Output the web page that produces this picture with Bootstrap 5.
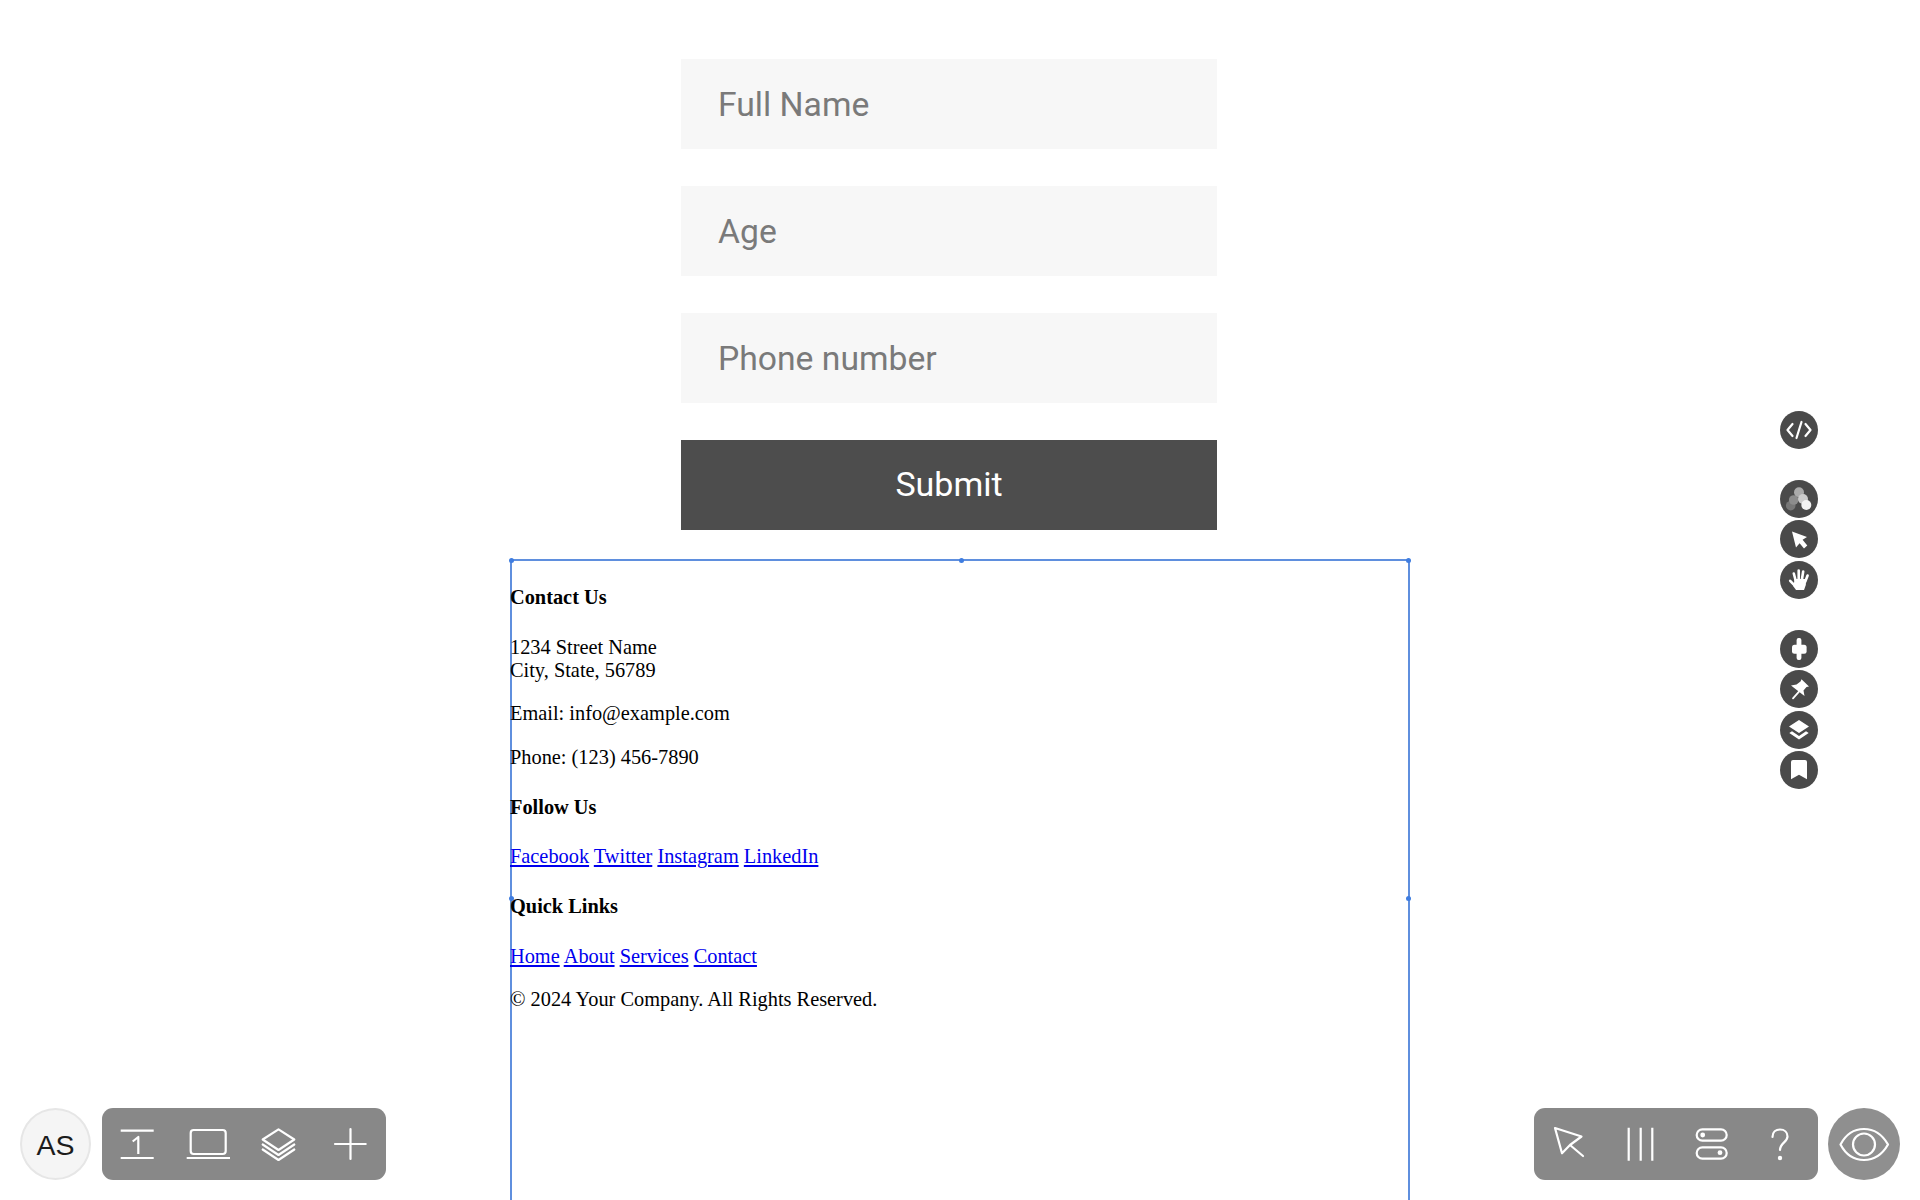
<!DOCTYPE html>
<html lang="en">
<head>
<meta charset="utf-8">
<title>Contact form</title>
<link href="https://cdn.jsdelivr.net/npm/bootstrap@5.3.0/dist/css/bootstrap.min.css" rel="stylesheet">
<style>
html,body{height:1200px;overflow:hidden;background:#fff}
.page-frame{width:900px;margin:0 auto;height:1200px}
.entry-form{width:536px;margin-left:171px;padding-top:59px;gap:37px}
.entry-form .form-control{height:90px;border:0;border-radius:0;background:#f7f7f7;padding:0 37px;font:400 33.7px Roboto,sans-serif;box-shadow:none}
.entry-form .form-control::placeholder{color:#7a7a7a;opacity:1}
.entry-form .send-btn{height:90px;border:0;border-radius:0;background:#4d4d4d;color:#fff;font:400 34px Roboto,sans-serif;padding:0 0 3px}
.select-box{margin-top:29px;height:641px;box-shadow:inset 2px 2px 0 #5f8fde,inset -2px 0 0 #5f8fde;font:400 20.35px/23px "Liberation Serif",serif;color:#000;padding-top:27px}
.select-box h4{font:700 20.35px/23px "Liberation Serif",serif;margin:0 0 26.6px}
.select-box p{margin:0 0 20.5px}
.select-box .next-head{margin-top:27px}
.select-box a{color:#0000ee;text-decoration:underline}
.grip{position:absolute;width:5px;height:5px;background:#3f7de0;border-radius:50%}
.grip-tl{left:-1px;top:-1px}.grip-tm{left:449px;top:-1px}.grip-tr{right:-1px;top:-1px}.grip-ml{left:-1px;top:337px}.grip-mr{right:-1px;top:337px}
.side-tools{position:fixed;left:1780px;top:411px;width:38px}
.side-tools svg{display:block;width:38px;height:38px;margin-bottom:2.5px}
.side-tools .gap-a{margin-top:30.5px}
.side-tools .gap-b{margin-top:31px}
.dock{position:fixed;top:1108px;width:284px;height:72px;background:#888;border-radius:11px}
.dock svg{width:71px;height:71px;flex:none}
.dock-left{left:102px}
.dock-right{left:1534px}
.avatar-chip{position:fixed;left:20px;top:1108px;width:71px;height:72px;border-radius:50%;background:#f5f5f5;border:2px solid #e6e6e6;color:#1c1c1c;font:400 28.5px "Liberation Sans",sans-serif;padding-top:2px}
.eye-chip{position:fixed;left:1828px;top:1108px;width:72px;height:72px;border-radius:50%;background:#8f8f8f}
.ic{fill:none;stroke:#fff;stroke-width:2.2;stroke-linecap:round;stroke-linejoin:round}
.ic-flat{stroke-linecap:butt}
.ic-fat{stroke-width:2.6}
.ic-pin{stroke-width:1.8}
</style>
</head>
<body>
<main class="page-frame">
  <form class="entry-form d-flex flex-column">
    <input class="form-control" type="text" placeholder="Full Name" aria-label="Full Name">
    <input class="form-control" type="text" placeholder="Age" aria-label="Age">
    <input class="form-control" type="text" placeholder="Phone number" aria-label="Phone number">
    <button class="btn send-btn w-100" type="button">Submit</button>
  </form>
  <section class="select-box position-relative">
    <span class="grip grip-tl"></span><span class="grip grip-tm"></span><span class="grip grip-tr"></span><span class="grip grip-ml"></span><span class="grip grip-mr"></span>
    <h4>Contact Us</h4>
    <p>1234 Street Name<br>City, State, 56789</p>
    <p>Email: info@example.com</p>
    <p>Phone: (123) 456-7890</p>
    <h4 class="next-head">Follow Us</h4>
    <p><a href="#">Facebook</a> <a href="#">Twitter</a> <a href="#">Instagram</a> <a href="#">LinkedIn</a></p>
    <h4 class="next-head">Quick Links</h4>
    <p><a href="#">Home</a> <a href="#">About</a> <a href="#">Services</a> <a href="#">Contact</a></p>
    <p>© 2024 Your Company. All Rights Reserved.</p>
  </section>
</main>

<aside class="side-tools">
  <svg viewBox="0 0 38 38"><circle cx="19" cy="19" r="19" fill="#4a4a4a"/><path class="ic" d="M12.5 13 7.5 19l5 6M25.5 13l5 6-5 6M21.5 11l-5 16"/></svg>
  <svg class="gap-a" viewBox="0 0 38 38"><circle cx="19" cy="19" r="19" fill="#4a4a4a"/><circle cx="10.7" cy="25.7" r="4.8" fill="#777"/><circle cx="13.7" cy="20" r="4.8" fill="#8c8c8c"/><circle cx="19" cy="12.3" r="5" fill="#aaa"/><circle cx="23" cy="19" r="5" fill="#cbcbcb"/><circle cx="26.3" cy="25" r="5" fill="#f2f2f2"/></svg>
  <svg viewBox="0 0 38 38"><circle cx="19" cy="19" r="19" fill="#4a4a4a"/><path fill="#fff" d="M12 11.5 27 17 22.6 19.8 27.3 25.6 24 28.6 19.6 23.2 16 27.6Z"/></svg>
  <svg viewBox="0 0 38 38"><circle cx="19" cy="19" r="19" fill="#4a4a4a"/><path fill="#fff" d="M14.5 18 26.2 18 25.8 24 24 29H16L13.5 25.5Z"/><path class="ic ic-fat" d="M15.5 19 13.8 12.5M18.7 18V9.5M22 18 23.2 10.5M25.3 20.5 27.6 14.5M15 24.8 10.2 19.8"/></svg>
  <svg class="gap-b" viewBox="0 0 38 38"><circle cx="19" cy="19" r="19" fill="#4a4a4a"/><rect x="12" y="14.7" width="14.6" height="9" rx="2.5" fill="#fff"/><rect x="16.6" y="8" width="4.8" height="22" rx="2" fill="#fff"/></svg>
  <svg viewBox="0 0 38 38"><circle cx="19" cy="19" r="19" fill="#4a4a4a"/><path fill="#fff" d="M21.5 9.3 29 16.5 26.5 17 23.5 20.5 24.5 26 11 15.5 16.5 14.5 20.5 11.5Z"/><path class="ic ic-pin" d="M13 28.3 19 21.7"/></svg>
  <svg viewBox="0 0 38 38"><circle cx="19" cy="19" r="19" fill="#4a4a4a"/><path fill="#fff" d="M19 9 29 15.5 19 22 9 15.5ZM9.3 22 12 20.3 19 25 26 20.3 28.7 22 19 28.5Z"/></svg>
  <svg viewBox="0 0 38 38"><circle cx="19" cy="19" r="19" fill="#4a4a4a"/><path fill="#fff" d="M13 9H25a2 2 0 0 1 2 2V28.3L19 23.8 11 28.3V11a2 2 0 0 1 2-2Z"/></svg>
</aside>

<div class="avatar-chip d-flex align-items-center justify-content-center">AS</div>
<nav class="dock dock-left d-flex">
  <svg viewBox="0 0 71 71"><path class="ic ic-flat" d="M18.7 22.7H51.7M18.7 50H51.7M30.7 33.5 36.3 29V46"/></svg>
  <svg viewBox="0 0 71 71"><rect class="ic" x="17.7" y="22" width="35" height="24" rx="3"/><path class="ic ic-flat" d="M13.7 50H57"/></svg>
  <svg viewBox="0 0 71 71"><path class="ic" d="M34.5 21.3 50.3 31.5 34.5 42 18.7 31.5ZM18.7 36.5 34.5 47 50.3 36.5M18.7 41.5 34.5 52 50.3 41.5"/></svg>
  <svg viewBox="0 0 71 71"><path class="ic" d="M20 36H50.7M35.5 21V51"/></svg>
</nav>
<nav class="dock dock-right d-flex">
  <svg viewBox="0 0 71 71"><path class="ic" d="M21 20 47.5 28.5 36 37 28 45.3ZM36 37 49 48"/></svg>
  <svg viewBox="0 0 71 71"><path class="ic ic-flat" d="M23.7 19.7V52.7M35.7 19.7V52.7M47.3 19.7V52.7"/></svg>
  <svg viewBox="0 0 71 71"><rect class="ic" x="20.7" y="21.3" width="30" height="11.4" rx="5.7"/><rect class="ic" x="20.7" y="39.3" width="30" height="11.4" rx="5.7"/><circle cx="26.7" cy="27" r="2.4" fill="#fff"/><circle cx="44" cy="44.7" r="2.4" fill="#fff"/></svg>
  <svg viewBox="0 0 71 71"><path class="ic" d="M25.5 29C25.5 24 29 21.5 33 21.5 37.5 21.5 40.5 24.5 40.5 28.5 40.5 34 33 35 33 42"/><circle cx="33" cy="50" r="2.2" fill="#fff"/></svg>
</nav>
<div class="eye-chip d-flex align-items-center justify-content-center">
  <svg width="72" height="71" viewBox="0 0 72 71"><path class="ic" d="M12.5 35.5C18 25 27 20 36 20S54 25 60 35.5C54 46 45 51 36 51S18 46 12.5 35.5Z"/><circle class="ic" cx="36" cy="35.5" r="11"/></svg>
</div>
<script src="https://cdn.jsdelivr.net/npm/bootstrap@5.3.0/dist/js/bootstrap.bundle.min.js"></script>
</body>
</html>
